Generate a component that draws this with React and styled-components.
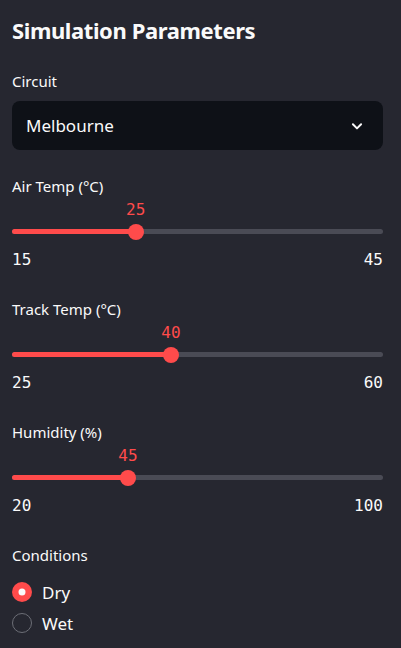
import React, { useState } from "react";
import styled, { createGlobalStyle } from "styled-components";

const GlobalStyle = createGlobalStyle`
  html, body {
    margin: 0;
    padding: 0;
    background: #262730;
  }
  body {
    font-family: "Source Sans Pro", "Noto Sans", sans-serif;
    color: #fafafa;
  }
`;

const SLIDERS = [
  { label: "Air Temp (°C)", min: 15, max: 45, value: 25 },
  { label: "Track Temp (°C)", min: 25, max: 60, value: 40 },
  { label: "Humidity (%)", min: 20, max: 100, value: 45 },
];

const App = () => {
  const [condition, setCondition] = useState("Dry");

  return (
    <Sidebar>
      <GlobalStyle />
      <Title>Simulation Parameters</Title>

      <FieldLabel>Circuit</FieldLabel>
      <Select>
        <span>Melbourne</span>
        <svg width="14" height="14" viewBox="0 0 24 24" fill="none">
          <path
            d="M5 9l7 7 7-7"
            stroke="#fafafa"
            strokeWidth="3.4"
            strokeLinecap="round"
            strokeLinejoin="round"
          />
        </svg>
      </Select>

      {SLIDERS.map((s) => {
        const pct = ((s.value - s.min) / (s.max - s.min)) * 100;
        return (
          <SliderBlock key={s.label}>
            <FieldLabel>{s.label}</FieldLabel>
            <SliderArea>
              <ValueLabel style={{ left: `${pct}%` }}>{s.value}</ValueLabel>
              <Track>
                <Fill style={{ width: `${pct}%` }} />
                <Thumb style={{ left: `${pct}%` }} />
              </Track>
            </SliderArea>
            <Ticks>
              <span>{s.min}</span>
              <span>{s.max}</span>
            </Ticks>
          </SliderBlock>
        );
      })}

      <FieldLabel>Conditions</FieldLabel>
      <RadioGroup>
        {["Dry", "Wet"].map((opt) => (
          <RadioRow key={opt} onClick={() => setCondition(opt)}>
            <RadioDot $checked={condition === opt} />
            <span>{opt}</span>
          </RadioRow>
        ))}
      </RadioGroup>
    </Sidebar>
  );
};

const Sidebar = styled.div`
  width: 401px;
  min-height: 648px;
  box-sizing: border-box;
  padding: 15px 18px 0 12px;
  background: #262730;
`;

const Title = styled.h2`
  margin: 0 0 26px;
  font-size: 22px;
  line-height: 30px;
  font-weight: 700;
  letter-spacing: -0.4px;
  color: #fafafa;
`;

const FieldLabel = styled.div`
  font-size: 15px;
  line-height: 20px;
  height: 20px;
  color: #fafafa;
`;

const Select = styled.div`
  margin-top: 10px;
  height: 49px;
  box-sizing: border-box;
  border-radius: 8px;
  background: #0e1117;
  display: flex;
  align-items: center;
  justify-content: space-between;
  padding: 0 19px 0 14px;
  font-size: 17px;
  color: #fafafa;
  margin-bottom: 26px;

  svg {
    flex-shrink: 0;
  }
`;

const SliderBlock = styled.div`
  height: 123px;
  display: flex;
  flex-direction: column;
`;

const SliderArea = styled.div`
  position: relative;
  height: 46px;
`;

const ValueLabel = styled.div`
  position: absolute;
  top: 5px;
  transform: translateX(-50%);
  font-family: "DejaVu Sans Mono", "Liberation Mono", monospace;
  font-size: 16px;
  line-height: 18px;
  color: #ff4b4b;
`;

const Track = styled.div`
  position: absolute;
  left: 0;
  right: 0;
  top: 33px;
  height: 5px;
  border-radius: 3px;
  background: #4a4b55;
`;

const Fill = styled.div`
  height: 100%;
  border-radius: 3px;
  background: #ff4b4b;
`;

const Thumb = styled.div`
  position: absolute;
  top: 50%;
  width: 16px;
  height: 16px;
  border-radius: 50%;
  background: #ff4b4b;
  transform: translate(-50%, -50%);
`;

const Ticks = styled.div`
  display: flex;
  justify-content: space-between;
  font-family: "DejaVu Sans Mono", "Liberation Mono", monospace;
  font-size: 16px;
  line-height: 20px;
  color: #fafafa;
  margin-top: 8px;
`;

const RadioGroup = styled.div`
  margin-top: 17px;
  display: flex;
  flex-direction: column;
  gap: 11px;
`;

const RadioRow = styled.label`
  display: flex;
  align-items: center;
  gap: 10px;
  height: 20px;
  font-size: 17px;
  color: #fafafa;
  cursor: pointer;
`;

const RadioDot = styled.span`
  width: 20px;
  height: 20px;
  box-sizing: border-box;
  border-radius: 50%;
  flex-shrink: 0;
  position: relative;
  background: ${(p) => (p.$checked ? "#ff4b4b" : "transparent")};
  border: ${(p) => (p.$checked ? "none" : "1px solid #6c6e76")};

  &::after {
    content: "";
    display: ${(p) => (p.$checked ? "block" : "none")};
    position: absolute;
    top: 50%;
    left: 50%;
    width: 7px;
    height: 7px;
    border-radius: 50%;
    background: #fafafa;
    transform: translate(-50%, -50%);
  }
`;

export default App;
